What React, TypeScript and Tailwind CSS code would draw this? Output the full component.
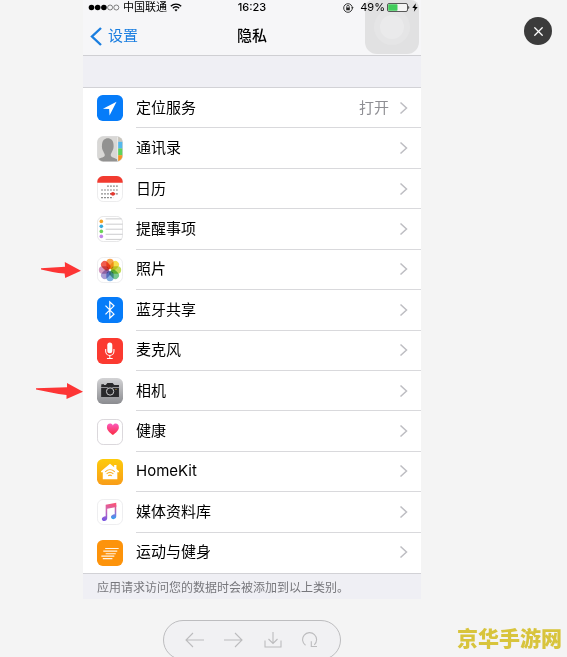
import { ReactNode } from 'react';
import { X } from 'lucide-react';

type PrivacyItem = {
  id: string;
  label: string;
  icon: ReactNode;
  value?: string;
  marker?: 'short' | 'long';
};

const LocationIcon = () => (
  <svg viewBox="0 0 27 27" className="size-[26px]">
    <rect width="27" height="27" rx="6" fill="#067cf9" />
    <path d="M20.3 7 6.2 14.2l6.4.4.4 6.6z" fill="#fff" />
  </svg>
);

const ContactsIcon = () => (
  <svg viewBox="0 0 27 27" className="size-[26px]">
    <defs>
      <clipPath id="contacts-clip"><rect x=".5" y=".5" width="26" height="26" rx="6" /></clipPath>
    </defs>
    <g clipPath="url(#contacts-clip)">
      <rect width="27" height="27" fill="#d9d8d6" />
      <path d="M0 27v-2c2-2.500 7-2.400 8-4.500.5-1.500-.7-2.800-1.400-4.500C5.400 14 4.800 12 5.200 9 5.500 4.500 8 2.300 11.200 2.300S17 4.500 17.200 9c.3 3-.3 5-1.500 7-.8 1.700-1.800 3-1.300 4.500 1 2.100 4.600 2 7.600 4.500v2z" fill="#929291" />
      <rect x="21" width="1" height="27" fill="#efeeec" />
      <rect x="22" width="5" height="6" fill="#c9c5bb" />
      <rect x="22" y="6" width="5" height="7" fill="#54b9ed" />
      <rect x="22" y="13" width="5" height="7" fill="#5fd35b" />
      <rect x="22" y="20" width="5" height="7" fill="#f79420" />
    </g>
    <rect x=".5" y=".5" width="26" height="26" rx="6" fill="none" stroke="#c9c9c9" strokeWidth=".5" />
  </svg>
);

const CalendarIcon = () => (
  <svg viewBox="0 0 27 27" className="size-[26px]">
    <rect x=".5" y=".5" width="26" height="26" rx="6" fill="#fff" stroke="#e2e2e4" strokeWidth=".7" />
    <path d="M.3 7V6a6 6 0 0 1 6-6h14.400a6 6 0 0 1 6 6v1z" fill="#f23b30" />
    <g stroke="#5a5a5a" strokeWidth="1.200" strokeDasharray="1.400 1.700">
      <path d="M10.700 10.500H23" />
      <path d="M4.500 14.500H23" />
      <path d="M4.500 18.500H23" />
      <path d="M4.500 22.500H17" />
    </g>
    <path d="M13.500 18.500H19" stroke="#d33a34" strokeWidth="1.200" />
    <circle cx="16.500" cy="18.500" r="2" fill="#e5382f" />
  </svg>
);

const RemindersIcon = () => (
  <svg viewBox="0 0 27 27" className="size-[26px]">
    <rect x=".5" y=".5" width="26" height="26" rx="6" fill="#fff" stroke="#dedee0" strokeWidth=".8" />
    <path d="M9 3h16.500M9 8.500h17.500M9 13.700h17.500M9 19h17.500M9 24.300h16.500" stroke="#c4c4c6" strokeWidth=".9" />
    <circle cx="4.500" cy="5.600" r="1.900" fill="#f5a123" />
    <circle cx="4.500" cy="10.700" r="1.900" fill="#35aadc" />
    <circle cx="4.500" cy="16" r="1.900" fill="#6bd558" />
    <circle cx="4.500" cy="21.200" r="1.900" fill="#c182e8" />
  </svg>
);

const petals = ['#f79a3b', '#f6dc3c', '#bcd84c', '#6cc487', '#74a8de', '#a195d2', '#cf92bd', '#f0503f'];

const PhotosIcon = () => (
  <svg viewBox="0 0 27 27" className="size-[26px]">
    <rect x=".5" y=".5" width="26" height="26" rx="6" fill="#fff" stroke="#e6e6e8" strokeWidth=".7" />
    <g style={{ isolation: 'isolate' }}>
      {petals.map((color, i) => (
        <rect
          key={color}
          x="9.700"
          y="1.900"
          width="7.600"
          height="10.600"
          rx="3.800"
          fill={color}
          opacity=".92"
          transform={`rotate(${i * 45} 13.500 13.500)`}
          style={{ mixBlendMode: 'multiply' }}
        />
      ))}
    </g>
  </svg>
);

const BluetoothIcon = () => (
  <svg viewBox="0 0 27 27" className="size-[26px]">
    <rect width="27" height="27" rx="6" fill="#067cf9" />
    <path d="m8.800 9 8.800 8.800-4.300 4V5.200l4.300 4L8.800 18" fill="none" stroke="#fff" strokeWidth="1.300" />
  </svg>
);

const MicIcon = () => (
  <svg viewBox="0 0 27 27" className="size-[26px]">
    <rect width="27" height="27" rx="6" fill="#fb3a30" />
    <rect x="10.700" y="4.800" width="5.200" height="11" rx="2.600" fill="#fff" />
    <path d="M9 11.500v2.300a4.300 4.300 0 0 0 8.600 0v-2.300M13.300 18.200v3M10.300 21.300h6" fill="none" stroke="#fff" strokeWidth="1.100" />
  </svg>
);

const CameraIcon = () => (
  <svg viewBox="0 0 27 27" className="size-[26px]">
    <defs>
      <linearGradient id="camera-bg" x1="0" y1="0" x2="0" y2="1">
        <stop offset="0" stopColor="#d3d3d5" />
        <stop offset="1" stopColor="#8b8c90" />
      </linearGradient>
    </defs>
    <rect width="27" height="27" rx="6" fill="url(#camera-bg)" />
    <path d="M4.500 7.200V6.500h2.800v.7h1.700c.8 0 1.200-1.900 2-1.900h5c.8 0 1.200 1.900 2 1.900h4.800v2.200H4.300zM4.300 10h18.500v9.800H4.300z" fill="#29292b" />
    <circle cx="13.600" cy="14" r="4.700" fill="#29292b" />
    <circle cx="13.600" cy="14" r="3.800" fill="none" stroke="#d0d0d2" strokeWidth="1" />
    <circle cx="19.700" cy="11.700" r=".6" fill="#e8b93d" />
  </svg>
);

const HealthIcon = () => (
  <svg viewBox="0 0 27 27" className="size-[26px]">
    <defs>
      <linearGradient id="health-heart" x1="0" y1="0" x2="0" y2="1">
        <stop offset="0" stopColor="#fb5abb" />
        <stop offset="1" stopColor="#fb2b42" />
      </linearGradient>
    </defs>
    <rect x=".5" y=".5" width="26" height="26" rx="6" fill="#fff" stroke="#cfcbd0" strokeWidth=".8" />
    <path d="M16.500 16.500c-3-2.200-6.200-4.700-6.200-8 0-2.300 1.400-3.700 3.200-3.700 1.400 0 2.400.7 3 1.900.6-1.200 1.600-1.900 3-1.900 1.800 0 3.200 1.400 3.200 3.700 0 3.300-3.200 5.800-6.200 8z" fill="url(#health-heart)" />
  </svg>
);

const HomeKitIcon = () => (
  <svg viewBox="0 0 27 27" className="size-[26px]">
    <defs>
      <linearGradient id="home-bg" x1="0" y1="0" x2="0" y2="1">
        <stop offset="0" stopColor="#fdcb0c" />
        <stop offset="1" stopColor="#f99d19" />
      </linearGradient>
    </defs>
    <rect width="27" height="27" rx="6" fill="url(#home-bg)" />
    <path d="m13.500 5 4.300 3.500V6.300h2.400v4.200l2.600 2.300v1h-1.700v7.200H6v-7.200H4.200v-1z" fill="#fff" />
    <path d="M8.500 13.300c3-2.800 7-2.800 10 0M10 15.500c2.200-2 4.800-2 7 0M11.600 17.500c1.200-1 2.600-1 3.800 0" fill="none" stroke="#f8b22c" strokeWidth="1.100" />
  </svg>
);

const MusicIcon = () => (
  <svg viewBox="0 0 27 27" className="size-[26px]">
    <defs>
      <linearGradient id="music-note" x1=".7" y1="0" x2=".4" y2="1">
        <stop offset="0" stopColor="#fa5276" />
        <stop offset=".45" stopColor="#cf67b3" />
        <stop offset="1" stopColor="#7c58e0" />
      </linearGradient>
      <linearGradient id="music-right" x1="0" y1="0" x2="0" y2="1">
        <stop offset="0" stopColor="#f9557a" />
        <stop offset=".6" stopColor="#8a72d8" />
        <stop offset="1" stopColor="#2fa4f2" />
      </linearGradient>
    </defs>
    <rect x=".5" y=".5" width="26" height="26" rx="6" fill="#fff" stroke="#e6e6e8" strokeWidth=".7" />
    <path d="M9 5.900 20 4v4.300L10.600 10v10c0 1.700-1.400 2.800-3 2.800-1.500 0-2.600-.8-2.600-2.100 0-1.800 1.700-2.500 4-2.900z" fill="url(#music-note)" />
    <path d="M18.400 6H20v12c0 1.800-1.300 2.900-2.900 2.900-1.500 0-2.600-.8-2.600-2.100 0-1.800 1.600-2.500 3.900-2.900z" fill="url(#music-right)" />
  </svg>
);

const MotionIcon = () => (
  <svg viewBox="0 0 27 27" className="size-[26px]">
    <rect width="27" height="27" rx="6" fill="#fd930b" />
    <path d="M8.500 8.800h14M6.500 11.600h14.500M9 14.300h10.500M4.500 16.800h13.500M6 19.300h10" stroke="#fff" strokeWidth="1.200" opacity=".9" />
  </svg>
);

const items: PrivacyItem[] = [
  { id: 'location', label: '定位服务', icon: <LocationIcon />, value: '打开' },
  { id: 'contacts', label: '通讯录', icon: <ContactsIcon /> },
  { id: 'calendar', label: '日历', icon: <CalendarIcon /> },
  { id: 'reminders', label: '提醒事项', icon: <RemindersIcon /> },
  { id: 'photos', label: '照片', icon: <PhotosIcon />, marker: 'short' },
  { id: 'bluetooth', label: '蓝牙共享', icon: <BluetoothIcon /> },
  { id: 'microphone', label: '麦克风', icon: <MicIcon /> },
  { id: 'camera', label: '相机', icon: <CameraIcon />, marker: 'long' },
  { id: 'health', label: '健康', icon: <HealthIcon /> },
  { id: 'homekit', label: 'HomeKit', icon: <HomeKitIcon /> },
  { id: 'media', label: '媒体资料库', icon: <MusicIcon /> },
  { id: 'motion', label: '运动与健身', icon: <MotionIcon /> },
];

// Red pointer that sits outside the panel, next to a row
const Marker = ({ type }: { type: 'short' | 'long' }) => (
  <span className="absolute right-full top-0 bottom-0 flex items-center">
    {type === 'short' ? (
      <svg width="42" height="16" viewBox="0 0 42 16">
        <path d="M0 6.300 24 4.800 23.800 0 40 8.800 24.200 16l-.6-4.500C15 11 8 8.800 0 7.400z" fill="#fd3535" />
      </svg>
    ) : (
      <svg width="47" height="16" viewBox="0 0 47 16">
        <path d="M0 5.300 31 4.300 31 0 47 8.700 30.500 16V12C20 10.800 10 8 0 6.400z" fill="#fd3535" />
      </svg>
    )}
  </span>
);

const Row = ({ item }: { item: PrivacyItem }) => (
  <li className="group relative">
    {item.marker && <Marker type={item.marker} />}
    <a href={`#${item.id}`} className="flex h-full items-center pl-[14px]">
      {item.icon}
      <span className="ml-[13px] flex flex-1 items-center self-stretch border-b border-[#d9d9dc] pr-[13px] group-last:border-transparent">
        <span className="flex-1 text-[15px] leading-5 text-black">{item.label}</span>
        {item.value && <span className="mr-[10px] text-[15px] leading-5 text-[#8e8e93]">{item.value}</span>}
        <svg width="9" height="14" viewBox="0 0 9 14" fill="none" stroke="#bdbdc2" strokeWidth="1.500">
          <path d="m1.500 1.500 6 5.500-6 5.500" />
        </svg>
      </span>
    </a>
  </li>
);

const StatusBar = () => (
  <div className="relative flex h-[15px] items-center justify-between pl-[5px] pr-[3px] text-[11px] leading-[15px] text-black">
    <div className="flex items-center gap-[3px]">
      <svg width="32" height="7" viewBox="0 0 32 7">
        <circle cx="3.500" cy="3.500" r="2.800" />
        <circle cx="9.700" cy="3.500" r="2.800" />
        <circle cx="15.900" cy="3.500" r="2.800" />
        <circle cx="22.100" cy="3.500" r="2.500" fill="none" stroke="#333" strokeWidth=".6" />
        <circle cx="28.300" cy="3.500" r="2.500" fill="none" stroke="#333" strokeWidth=".6" />
      </svg>
      <span>中国联通</span>
      <svg width="12" height="9" viewBox="0 0 12 9" fill="none" stroke="#000" strokeWidth="1.300">
        <path d="M.8 3.300c3-2.900 7.400-2.900 10.400 0M2.800 5.300c1.900-1.800 4.500-1.800 6.400 0" />
        <path d="m6 8.500-1.600-1.700c1-.9 2.200-.9 3.200 0z" fill="#000" stroke="none" />
      </svg>
    </div>
    <span className="absolute left-1/2 -translate-x-1/2 font-medium">16:23</span>
    <div className="flex items-center">
      <svg width="11" height="10" viewBox="0 0 11 10" fill="none" stroke="#222" className="mr-[6px]">
        <circle cx="5" cy="5" r="4.300" strokeWidth=".9" />
        <path d="M3.800 4.800V3.500a1.200 1.200 0 0 1 2.400 0v1.300" strokeWidth=".8" />
        <rect x="3.200" y="4.500" width="3.600" height="2.800" fill="#222" stroke="none" />
        <path d="m8.300 4.300 1.200 1.500L10.700 4.300z" fill="#222" stroke="none" />
      </svg>
      <span>49%</span>
      <svg width="23" height="9" viewBox="0 0 23 9" className="ml-[2px] mr-[2px]">
        <rect x=".5" y=".5" width="20" height="8" rx="1.500" fill="#f4f4f4" stroke="#333" strokeWidth=".8" />
        <rect x="1.200" y="1.200" width="9.300" height="6.600" rx=".8" fill="#42cc5c" />
        <path d="M21.300 3v3c1.300-.4 1.300-2.600 0-3z" fill="#222" />
      </svg>
      <svg width="6" height="9" viewBox="0 0 6 9">
        <path d="M3.800.3.300 5h2.300l-.7 3.700L5.700 3.900H3.300z" />
      </svg>
    </div>
  </div>
);

const ViewerToolbar = () => (
  <div className="mt-[21px] flex h-10 w-[178px] shrink-0 items-center justify-between rounded-full border border-[#bdbdbf] bg-[#f1f1f3] px-[21px] text-[#bcbcbe]">
    <button type="button" aria-label="上一张">
      <svg width="19" height="16" viewBox="0 0 19 16" fill="none" stroke="currentColor" strokeWidth="1.100">
        <path d="M19 8H1M8 1 1 8l7 7" />
      </svg>
    </button>
    <button type="button" aria-label="下一张">
      <svg width="19" height="16" viewBox="0 0 19 16" fill="none" stroke="currentColor" strokeWidth="1.100">
        <path d="M0 8h18M11 1l7 7-7 7" />
      </svg>
    </button>
    <button type="button" aria-label="下载">
      <svg width="18" height="16" viewBox="0 0 18 16" fill="none" stroke="currentColor" strokeWidth="1.100">
        <path d="M9 0v11.500M4.500 7 9 11.500 13.500 7M1 8.500v6.500h16V8.500" />
      </svg>
    </button>
    <button type="button" aria-label="旋转">
      <svg width="17" height="16" viewBox="0 0 17 16" fill="none" stroke="currentColor" strokeWidth="1.100">
        <path d="M4 13.300a7 7 0 1 1 8.800-.5M15.500 14.500H9.800V9.200" transform="translate(-.5 0)" />
      </svg>
    </button>
  </div>
);

export default function App() {
  return (
    <div className="relative flex h-screen overflow-hidden bg-[#f4f4f4] font-['Inter','Noto_Sans_CJK_SC',sans-serif]">
      <main className="flex flex-1 flex-col items-center">
        <section className="w-full max-w-[338px] shrink-0 bg-[#efeff4]">
          <header className="relative border-b border-[#cfcfd3] bg-[#f6f6f8]">
            <div className="absolute right-[2px] top-0 flex h-[54px] w-[54px] items-center justify-center rounded-b-xl rounded-t-lg bg-[#e1e1e2]">
              <div className="flex size-9 items-center justify-center rounded-full bg-[#e5e5e6]">
                <div className="size-6 rounded-full bg-[#eaeaeb]" />
              </div>
            </div>
            <StatusBar />
            <div className="relative flex h-10 items-center justify-center pt-[2px]">
              <button type="button" className="absolute left-[7px] flex items-center gap-[6px] text-[15px] leading-5 text-[#1a7ee0]">
                <svg width="12" height="19" viewBox="0 0 12 19" fill="none" stroke="currentColor" strokeWidth="2.400">
                  <path d="M11 1 2 9.500l9 8.500" />
                </svg>
                设置
              </button>
              <h1 className="text-[15px] font-medium leading-5 text-black">隐私</h1>
            </div>
          </header>

          <ul className="mt-[31px] grid min-h-[487px] auto-rows-fr border-y border-[#d2d2d6] bg-white">
            {items.map((item) => (
              <Row key={item.id} item={item} />
            ))}
          </ul>

          <p className="px-[14px] pb-[3px] pt-[6px] text-[12px] leading-4 text-[#77777c]">
            应用请求访问您的数据时会被添加到以上类别。
          </p>
        </section>

        <ViewerToolbar />
      </main>

      <aside className="flex w-[63px] shrink-0 justify-center pt-[17px]">
        <button type="button" aria-label="关闭" className="mr-px ml-[6px] flex size-7 items-center justify-center rounded-full bg-[#3b3b3b] text-white">
          <X size={15} strokeWidth={2} />
        </button>
      </aside>

      <span className="absolute bottom-1 right-[5px] text-[21px] font-black leading-7 text-[#d8c43c]">京华手游网</span>
    </div>
  );
}
